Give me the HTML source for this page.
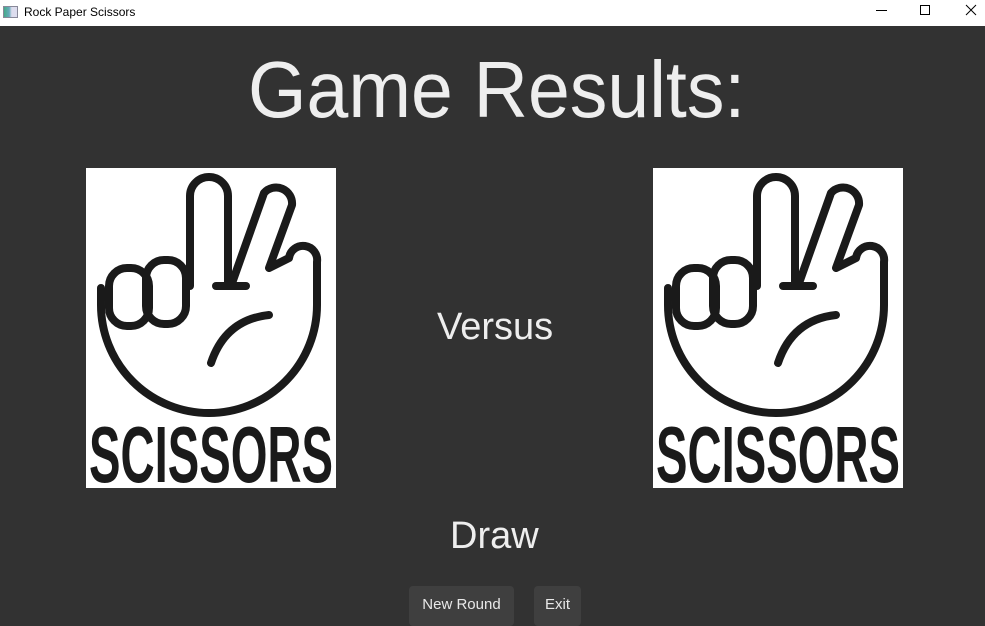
<!DOCTYPE html>
<html><head><meta charset="utf-8"><style>
*{margin:0;padding:0;box-sizing:border-box}
body{width:985px;height:619px;overflow:hidden;background:#323232;font-family:"Liberation Sans",sans-serif;position:relative}
.tb{position:absolute;left:0;top:0;width:985px;height:26px;background:#fff;color:#000;font-size:12px}
.tb .t{position:absolute;left:24px;top:5px}
.tb .ic{position:absolute;left:3px;top:6px;width:15px;height:12px;border:1px solid #889;background:linear-gradient(90deg,#4a8 0,#6ab 40%,#dde 60%)}
.c{position:absolute;color:#eee;white-space:nowrap}
.card{position:absolute;top:168px;width:250px;height:320px;background:#fff}
.btn{position:absolute;top:586px;height:40px;background:#3f3f3f;border-radius:4px;color:#e8e8e8;font-size:15px;padding-top:10px;text-align:center}
</style></head><body>
<div class="tb"><div class="ic"></div><div class="t">Rock Paper Scissors</div>
<svg style="position:absolute;left:870px;top:0" width="115" height="26"><path d="M6 10.5h11" stroke="#000"/><rect x="50.5" y="5.5" width="9" height="9" fill="none" stroke="#000"/><path d="M96 5l10 10M106 5l-10 10" stroke="#000"/></svg></div>
<div class="c" style="left:248px;top:44px;font-size:80px;transform-origin:left top;transform:scaleX(0.94)">Game Results:</div>
<div class="c" style="left:437px;top:306px;font-size:38px">Versus</div>
<div class="c" style="left:450px;top:515px;font-size:38px">Draw</div>
<div class="card" style="left:86px"><svg width="250" height="320" viewBox="0 0 250 320">
<g fill="none" stroke="#1a1a1a" stroke-width="8" stroke-linecap="round" stroke-linejoin="round">
<path d="M104 118V28a19 19 0 0 1 38 0v90"/>
<path d="M145 118L178 25a16 16 0 0 1 28 12L183 100l20-10a10 10 0 0 1 28 4V137a108 108 0 0 1-216 0V120"/>
<path d="M130 118h30"/>
<rect x="23" y="100" width="40" height="58" rx="18"/>
<rect x="60" y="92" width="40" height="64" rx="18"/>
<path d="M125 195c10-30 30-45 58-48"/>
</g>
<text x="125" y="314" text-anchor="middle" font-family="Liberation Sans Narrow,Liberation Sans,sans-serif" font-weight="bold" font-size="80" fill="#1a1a1a" textLength="244" lengthAdjust="spacingAndGlyphs">SCISSORS</text>
</svg></div>
<div class="card" style="left:653px"><svg width="250" height="320" viewBox="0 0 250 320">
<g fill="none" stroke="#1a1a1a" stroke-width="8" stroke-linecap="round" stroke-linejoin="round">
<path d="M104 118V28a19 19 0 0 1 38 0v90"/>
<path d="M145 118L178 25a16 16 0 0 1 28 12L183 100l20-10a10 10 0 0 1 28 4V137a108 108 0 0 1-216 0V120"/>
<path d="M130 118h30"/>
<rect x="23" y="100" width="40" height="58" rx="18"/>
<rect x="60" y="92" width="40" height="64" rx="18"/>
<path d="M125 195c10-30 30-45 58-48"/>
</g>
<text x="125" y="314" text-anchor="middle" font-family="Liberation Sans Narrow,Liberation Sans,sans-serif" font-weight="bold" font-size="80" fill="#1a1a1a" textLength="244" lengthAdjust="spacingAndGlyphs">SCISSORS</text>
</svg></div>
<div class="btn" style="left:409px;width:105px">New Round</div>
<div class="btn" style="left:534px;width:47px">Exit</div>
</body></html>
